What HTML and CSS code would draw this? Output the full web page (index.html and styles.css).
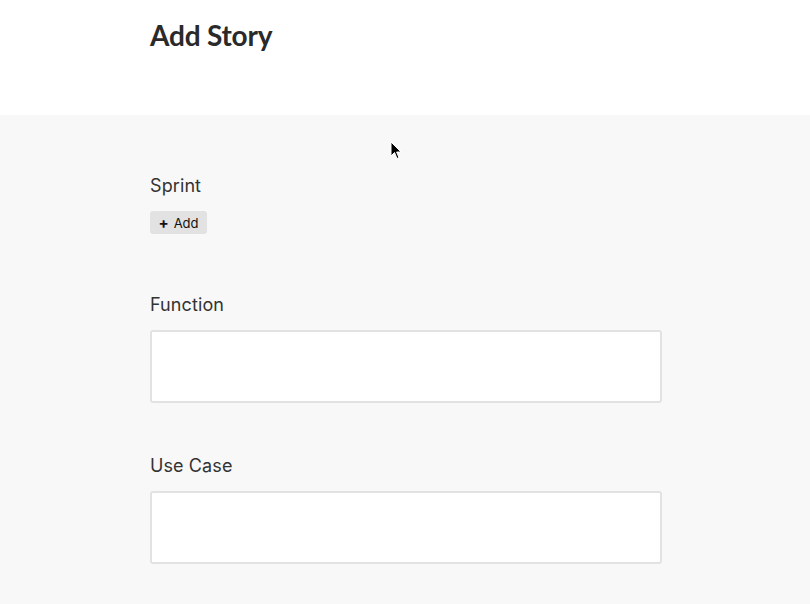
FILE: index.html
```html
<!DOCTYPE html>
<html>
<head>
<meta charset="utf-8">
<link rel="stylesheet" href="styles.css">
</head>
<body>
<header class="header">
  <h1 class="title">Add Story</h1>
</header>
<main class="form">
  <section class="field">
    <label class="label">Sprint</label>
    <button class="add-btn"><span class="plus">+</span><span>Add</span></button>
  </section>
  <section class="field field-gap">
    <label class="label">Function</label>
    <div class="input"></div>
  </section>
  <section class="field field-gap2">
    <label class="label">Use Case</label>
    <div class="input"></div>
  </section>
</main>
<svg class="cursor" width="14" height="20" viewBox="0 0 14 20">
  <path d="M1 1 L1 15 L4.5 11.5 L7 17.5 L9 16.6 L6.6 11 L11 11 Z" fill="#000" stroke="#fff" stroke-width="1"/>
</svg>
</body>
</html>
```
FILE: styles.css
```css
html, body {
  margin: 0;
  padding: 0;
}
body {
  width: 810px;
  height: 604px;
  background: #f8f8f8;
  font-family: Inter, "Noto Sans", "Liberation Sans", sans-serif;
  color: #333;
  position: relative;
  overflow: hidden;
}
.header {
  background: #fff;
  height: 115px;
  padding: 0 0 0 150px;
  box-sizing: border-box;
}
.title {
  margin: 0;
  padding-top: 18px;
  font-family: Lato, "Liberation Sans", sans-serif;
  font-weight: 700;
  font-size: 28px;
  line-height: 34px;
  color: #2a2a2a;
  letter-spacing: -0.2px;
}
.form {
  padding: 60px 0 0 150px;
  display: flex;
  flex-direction: column;
}
.field {
  display: flex;
  flex-direction: column;
  align-items: flex-start;
}
.field-gap { margin-top: 60px; }
.field-gap2 { margin-top: 52px; }
.label {
  font-size: 18px;
  line-height: 22px;
  color: #333;
  margin-bottom: 14px;
  letter-spacing: 0.1px;
}
.add-btn {
  height: 23px;
  width: 57px;
  border: none;
  border-radius: 3px;
  background: #e2e2e2;
  font-family: Inter, "Noto Sans", "Liberation Sans", sans-serif;
  font-size: 13px;
  color: #111;
  padding: 0;
  display: flex;
  align-items: center;
  justify-content: center;
  gap: 5px;
}
.plus {
  font-weight: 700;
  font-size: 15px;
  line-height: 1;
  margin-top: -1px;
}
.input {
  width: 512px;
  height: 73px;
  box-sizing: border-box;
  background: #fff;
  border: 2px solid #e2e2e2;
  border-radius: 3px;
}
.cursor {
  position: absolute;
  left: 390px;
  top: 141px;
}
```
